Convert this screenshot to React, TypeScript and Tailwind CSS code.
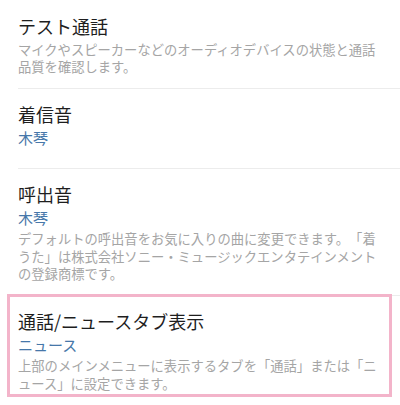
import React from 'react'

type Item = {
  title: string
  value?: string
  desc?: string
  pb: string
}

const items: Item[] = [
  {
    title: 'テスト通話',
    desc: 'マイクやスピーカーなどのオーディオデバイスの状態と通話品質を確認します。',
    pb: 'pb-[12px]',
  },
  { title: '着信音', value: '木琴', pb: 'pb-[17.5px]' },
  {
    title: '呼出音',
    value: '木琴',
    desc: 'デフォルトの呼出音をお気に入りの曲に変更できます。「着うた」は株式会社ソニー・ミュージックエンタテインメントの登録商標です。',
    pb: 'pb-[12px]',
  },
  {
    title: '通話/ニュースタブ表示',
    value: 'ニュース',
    desc: '上部のメインメニューに表示するタブを「通話」または「ニュース」に設定できます。',
    pb: 'pb-[12px]',
  },
]

export default function App() {
  return (
    <div className="relative w-[400px] h-[405px] overflow-hidden bg-white font-['Noto_Sans_CJK_JP','Noto_Sans',sans-serif] [text-spacing-trim:space-all]">
      {items.map((it, idx) => (
        <div key={idx}>
          {idx > 0 ? <div className="ml-[18px] h-px bg-[#ececec]" /> : null}
          <div className={`pl-[18px] pr-[20px] pt-[13.5px] ${it.pb}`}>
            <div className="text-[18px] leading-[24px] text-[#1e1e1e]">{it.title}</div>
            {it.value ? (
              <div className="text-[15px] leading-[24px] text-[#4677a9]">{it.value}</div>
            ) : null}
            {it.desc ? (
              <div className={`text-[13.3px] leading-[17.5px] text-[#a5a5a5] ${it.value ? '' : 'mt-[3px]'}`}>
                {it.desc}
              </div>
            ) : null}
          </div>
        </div>
      ))}

      {/* highlight frame over the last row */}
      <div className="pointer-events-none absolute left-[7px] top-[294px] w-[385px] h-[103px] border-[3px] border-[#f3b4ca]" />
    </div>
  )
}
